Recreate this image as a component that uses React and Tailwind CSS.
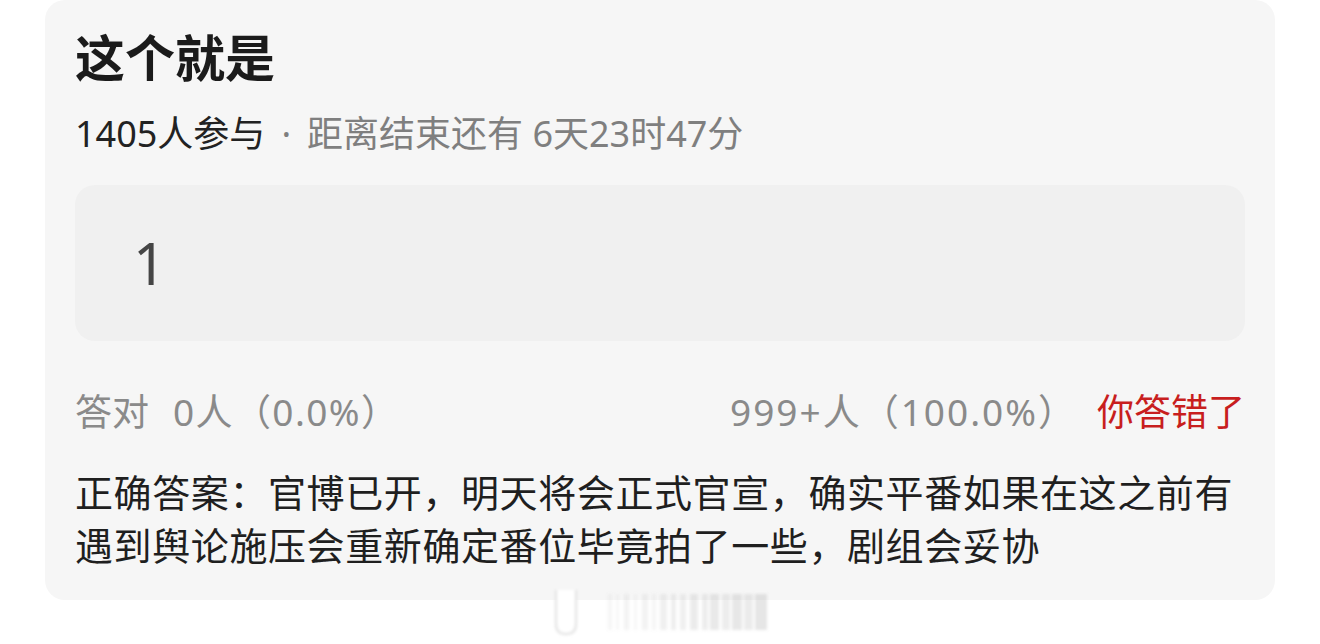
import React from "react";

const FONT = { fontFamily: '"Noto Sans", "Noto Sans CJK SC", sans-serif' };

// faint stripes of the watermark strip below the card
const stripes = [
  { x: 58, w: 4, o: 0.1 },
  { x: 66, w: 3, o: 0.08 },
  { x: 74, w: 5, o: 0.12 },
  { x: 84, w: 3, o: 0.09 },
  { x: 92, w: 6, o: 0.13 },
  { x: 102, w: 4, o: 0.1 },
  { x: 110, w: 7, o: 0.15 },
  { x: 121, w: 5, o: 0.17 },
  { x: 130, w: 6, o: 0.16 },
  { x: 140, w: 8, o: 0.2 },
  { x: 152, w: 6, o: 0.18 },
  { x: 160, w: 9, o: 0.22 },
  { x: 172, w: 8, o: 0.18 },
  { x: 182, w: 10, o: 0.24 },
  { x: 194, w: 9, o: 0.2 },
  { x: 205, w: 12, o: 0.25 },
];

function Watermark() {
  return (
    <svg width="240" height="52" viewBox="0 0 240 52" className="block">
      <defs>
        <filter id="soft" x="-10%" y="-10%" width="120%" height="120%">
          <feGaussianBlur stdDeviation="1.6" />
        </filter>
      </defs>
      <g filter="url(#soft)">
        <path
          d="M6 2 V36 Q6 46 16 46 Q26 46 26 36 V2"
          fill="#ffffff"
          stroke="#e0e0e0"
          strokeWidth="2"
        />
        {stripes.map((s, i) => (
          <rect key={i} x={s.x} y={6} width={s.w} height={36} fill="#9a9a9a" opacity={s.o} />
        ))}
      </g>
    </svg>
  );
}

export default function App() {
  return (
    <div className="w-[1320px] h-[644px] bg-white overflow-hidden px-[45px]" style={FONT}>
      <div className="w-[1230px] rounded-[20px] bg-[#f6f6f6] px-[30px] pt-[28px] pb-[28px]">
        <h1 className="text-[50px] leading-[60px] font-bold text-[#1b1b1b]">这个就是</h1>

        <div className="mt-[22px] text-[36px] leading-[48px] whitespace-nowrap">
          <span className="text-[#222222]">1405人参与</span>
          <span className="text-[#7f7f7f]">
            <span className="ml-[16px] mr-[16px]">·</span>距离结束还有 6天23时47分
          </span>
        </div>

        <div className="mt-[27px] h-[156px] rounded-[20px] bg-[#f0f0f0] flex items-center pl-[58px]">
          <span className="text-[58px] leading-none text-[#454545]">1</span>
        </div>

        <div className="mt-[47px] flex items-center justify-between text-[37px] leading-[48px] whitespace-nowrap">
          <div className="flex items-center gap-[24px] text-[#8a8a8a]">
            <span>答对</span>
            <span className="tracking-[1.4px]">0人（0.0%）</span>
          </div>
          <div className="flex items-center">
            <span className="text-[#8a8a8a] tracking-[2px]">999+人（100.0%）</span>
            <span className="ml-[20px] text-[#c81e1e]">你答错了</span>
          </div>
        </div>

        <p className="mt-[30px] text-[38px] leading-[53px] tracking-[0.6px] text-[#1f1f1f] whitespace-nowrap">
          正确答案：官博已开，明天将会正式官宣，确实平番如果在这之前有
          <br />
          遇到舆论施压会重新确定番位毕竟拍了一些，剧组会妥协
        </p>
      </div>

      <div className="-mt-[12px] pl-[505px]">
        <Watermark />
      </div>
    </div>
  );
}
